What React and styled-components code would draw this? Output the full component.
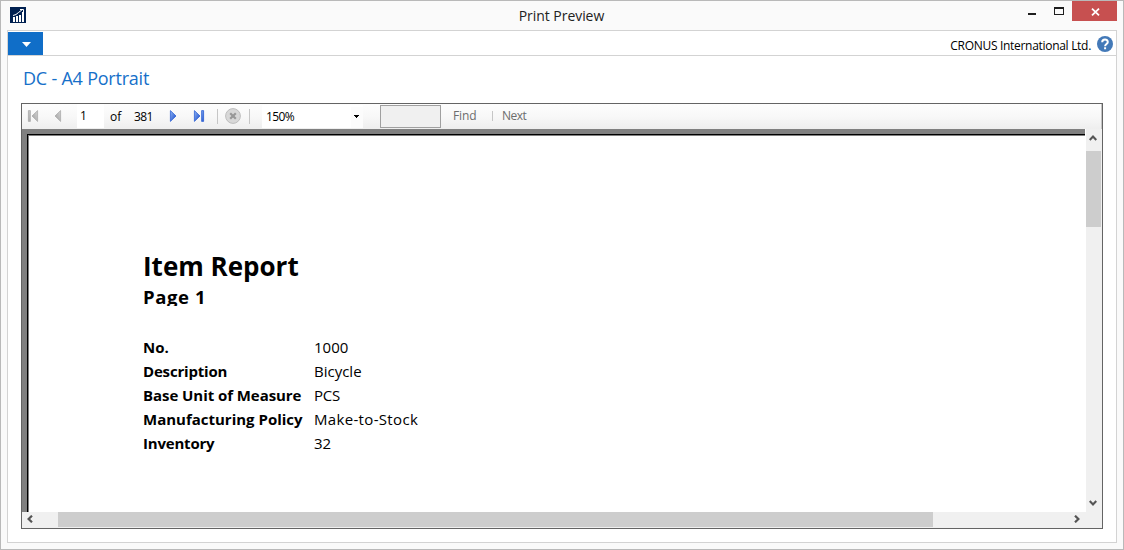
import React from "react";
import styled, { createGlobalStyle } from "styled-components";

const Global = createGlobalStyle`
  * { box-sizing: border-box; }
  body { margin: 0; font-family: "Open Sans", "Noto Sans", sans-serif; color: #000; }
  svg { display: block; flex: none; }
`;

const Window = styled.div`
  width: 1124px; height: 550px; background: #fafafa;
  border: 1px solid #b9b9b9; display: flex; flex-direction: column;
  overflow: hidden;
`;
const TitleBar = styled.header`
  height: 29px; flex: none; display: grid;
  grid-template-columns: 200px 1fr 200px; padding: 0 6px 0 9px;
`;
const AppIcon = styled.div` padding-top: 6px; `;
const Text = styled.span`
  display: block; white-space: pre; margin: 0;
  font-size: ${p => p.$size}px; line-height: ${p => p.$line || 20}px;
  font-weight: ${p => p.$weight || 400};
  letter-spacing: ${p => p.$track || 0}px;
  color: ${p => p.$color || "#000"};
`;
const Caption = styled.div`
  display: flex; justify-content: center; padding: 5px 4px 0 0;
`;
const Controls = styled.div` display: flex; justify-content: flex-end; `;
const CloseButton = styled.button`
  width: 45px; height: 20px; margin-left: 8px; padding: 1px 0 0 1px; border: 0; background: #c75050;
  display: flex; align-items: center; justify-content: center;
`;
const Body = styled.main`
  width: 1110px; height: 513px; margin-left: 6px; background: #fff;
  border: 1px solid #d3d3d3; flex: none;
`;
const Ribbon = styled.nav`
  height: 25px; border-bottom: 1px solid #d3d3d3; display: flex;
  justify-content: space-between;
`;
const FileTab = styled.button`
  width: 35px; height: 23px; margin-top: 1px; border: 0; padding: 1px 0 0 2px; background: #106ec8;
  display: flex; align-items: center; justify-content: center;
`;
const Company = styled.div` display: flex; gap: 5px; padding: 5px 3px 0 0; `;
const Heading = styled.div` height: 47px; padding: 10px 0 0 15px; `;
const Viewer = styled.section`
  width: 1082px; height: 426px; margin-left: 13px; border: 1px solid #646464;
  display: flex; flex-direction: column;
`;
const Toolbar = styled.div`
  height: 25px; flex: none; display: flex;
  background: linear-gradient(#fdfdfd, #f8f8f8 50%, #eeeeee);
  border-right: 1px solid #c4c4c4;
`;
const Tool = styled.div`
  width: ${p => p.$w}px; height: 25px; flex: none; display: flex;
  padding: ${p => p.$top || 0}px 0 0 ${p => p.$left || 0}px;
`;
const PageField = styled(Tool)` background: #fff; height: 24px; `;
const Zoom = styled(Tool)`
  background: #fff; height: 23px; margin-top: 1px; justify-content: space-between;
`;
const ZoomArrow = styled.div` width: 12px; height: 21px; padding: 8px 0 0 3px; background: #fcfcfc; `;
const SearchBox = styled.div`
  width: 61px; height: 23px; margin: 1px 0 0 17px; border: 1px solid #a0a0a0; background: #f0f0f0;
`;
const Divider = styled.div`
  width: 1px; height: ${p => p.$h}px; margin-top: ${p => p.$top}px; background: #c6c6c6;
`;
const Stage = styled.div` flex: 1; display: grid; grid-template-columns: 1063px 1fr; grid-template-rows: 383px 1fr; `;
const Canvas = styled.div` background: #808080; padding: 5px 0 0 5px; `;
const Page = styled.article`
  height: 378px; border: solid #000; border-width: 1px 0 0 1px;
  box-shadow: inset 1px 1px 0 #808080; background: #fff;
  padding: 114px 0 0 115px;
`;
const PageLine = styled.div` height: 22px; overflow: hidden; `;
const Fields = styled.dl`
  margin: 29px 0 0; display: grid; grid-template-columns: 171px 1fr; grid-auto-rows: 24px;
`;
const VScroll = styled.div`
  background: #f0f0f0; border-left: 1px solid #fff; display: flex; flex-direction: column;
  justify-content: space-between; padding: 5px 0 5px;
`;
const VTop = styled.div` display: flex; flex-direction: column; gap: 9px; svg { margin-left: 3px; } `;
const VThumb = styled.div` width: 15px; height: 76px; background: #cdcdcd; `;
const HScroll = styled.div`
  grid-column: 1 / 3; background: #f0f0f0; display: flex; align-items: flex-start; padding-left: 4px;
`;
const HThumb = styled.div` width: 875px; height: 15px; margin: 0 140px 0 24px; background: #cdcdcd; `;
const HArrow = styled.div` margin-top: 3px; `;
const Arrow = styled.svg` transform: rotate(${p => p.$turn || 0}deg); `;

const ScrollArrow = ({ turn }) => (
  <Arrow $turn={turn} width="8" height="8" viewBox="0 0 8 8">
    <path d="M.7 6 4 2.6 7.3 6" fill="none" stroke="#555" strokeWidth="2.2" />
  </Arrow>
);

const Nav = ({ bar, flip, on }) => (
  <svg width="12" height="12" viewBox="0 0 12 12">
    <defs>
      <linearGradient id={on ? "navOn" : "navOff"} x1="0" y1="0" x2="1" y2="1">
        <stop offset="0" stopColor={on ? "#8fb4f4" : "#d2d2d2"} />
        <stop offset="1" stopColor={on ? "#1648c8" : "#a0a0a0"} />
      </linearGradient>
    </defs>
    <g transform={flip ? "translate(12 0) scale(-1 1)" : undefined} fill={`url(#${on ? "navOn" : "navOff"})`} stroke={on ? "#2f62d4" : "#ababab"} strokeWidth=".8">
      <path d="M1.4 .6 7 6 1.4 11.4Z" />
      {bar && <path d="M8.6 .6h2v10.8h-2Z" />}
    </g>
  </svg>
);

const fields = [
  ["No.", "1000", 0, 0],
  ["Description", "Bicycle", -0.18, 0],
  ["Base Unit of Measure", "PCS", -0.06, -0.2],
  ["Manufacturing Policy", "Make-to-Stock", 0, 0.33],
  ["Inventory", "32", -0.2, 0],
];

export default function App() {
  return (
    <>
      <Global />
      <Window>
        <TitleBar>
          <AppIcon>
            <svg width="16" height="16" viewBox="0 0 16 16">
              <path fill="#002050" d="M0 0h16v16H0z" />
              <path fill="#fff" d="M3 10h2v5H3zM6 9h2v6H6zM9 8h2v7H9zM12 5h2v10h-2z" />
              <path d="M3 8.500 6 7.500 8.500 5.500 12.500 2.500M10 2.500h3.500v2.500" fill="none" stroke="#fff" />
            </svg>
          </AppIcon>
          <Caption><Text $size={14} $track={-0.05} $color="#222">Print Preview</Text></Caption>
          <Controls>
            <svg width="37" height="20" viewBox="0 0 37 20">
              <path fill="#1e1e1e" d="M1 12h8v2H1z" />
              <path fill="#1e1e1e" fillRule="evenodd" d="M27 6h10v8H27zM28 8v5h8V8z" />
            </svg>
            <CloseButton aria-label="Close">
              <svg width="9" height="8" viewBox="0 0 9 8"><path d="M1 .7 8 7.3M8 .7 1 7.3" stroke="#fff" strokeWidth="1.8" /></svg>
            </CloseButton>
          </Controls>
        </TitleBar>
        <Body>
          <Ribbon>
            <FileTab aria-label="Menu">
              <svg width="9" height="5" viewBox="0 0 9 5"><path d="M0 0h9L4.5 5z" fill="#fff" /></svg>
            </FileTab>
            <Company>
              <Text $size={12} $track={-0.3}>CRONUS International Ltd.</Text>
              <svg width="17" height="17" viewBox="0 0 17 17">
                <circle cx="9" cy="8" r="8" fill="#4379b8" />
                <path d="M6.200 6.200C6.200 2.700 11.800 2.700 11.800 6c0 2-2.700 2-2.700 4.200M9.100 11.300v2" fill="none" stroke="#fff" strokeWidth="2" />
              </svg>
            </Company>
          </Ribbon>
          <Heading><Text $size={18} $line={25} $track={-0.22} $color="#1670c9">DC - A4 Portrait</Text></Heading>
          <Viewer>
            <Toolbar>
              <Tool $w={28} $top={6} $left={5}><Nav bar flip /></Tool>
              <Tool $w={27} $top={6}><Nav flip /></Tool>
              <PageField $w={27} $left={3} $top={2}><Text $size={12}>1</Text></PageField>
              <Tool $w={30} $left={6} $top={3}><Text $size={12}>of</Text></Tool>
              <Tool $w={35} $top={3}><Text $size={12} $track={-0.6}>381</Text></Tool>
              <Tool $w={24} $top={6}><Nav on /></Tool>
              <Tool $w={24} $top={6}><Nav bar on /></Tool>
              <Divider $h={15} $top={5} />
              <Tool $w={31} $left={7} $top={4}>
                <svg width="16" height="16" viewBox="0 0 16 16">
                  <circle cx="8" cy="8" r="7.4" fill="#d8d8d8" stroke="#bdbdbd" />
                  <path d="M5.2 5.2 10.8 10.8M10.8 5.2 5.2 10.8" stroke="#989898" strokeWidth="2.2" />
                </svg>
              </Tool>
              <Divider $h={15} $top={5} />
              <Tool $w={12} />
              <Zoom $w={101} $left={4} $top={2}>
                <Text $size={12} $track={-0.6}>150%</Text>
                <ZoomArrow><svg width="5" height="3" viewBox="0 0 5 3"><path d="M0 0h5v1H4v1H3v1H2V2H1V1H0z" /></svg></ZoomArrow>
              </Zoom>
              <SearchBox />
              <Tool $w={51} $left={12} $top={2}><Text $size={12} $track={-0.1} $color="#6d6d6d">Find</Text></Tool>
              <Divider $h={10} $top={7} />
              <Tool $w={50} $left={9} $top={2}><Text $size={12} $track={-0.5} $color="#6d6d6d">Next</Text></Tool>
            </Toolbar>
            <Stage>
              <Canvas>
                <Page>
                  <Text as="h1" $size={26} $line={35} $weight={700}>Item Report</Text>
                  <PageLine><Text $size={18.5} $line={26} $weight={700} $track={0.6}>Page 1</Text></PageLine>
                  <Fields>
                    {fields.map(([label, value, lt, vt]) => (
                      <React.Fragment key={label}>
                        <Text as="dt" $size={15} $line={24} $weight={700} $track={lt}>{label}</Text>
                        <Text as="dd" $size={15} $line={24} $track={vt}>{value}</Text>
                      </React.Fragment>
                    ))}
                  </Fields>
                </Page>
              </Canvas>
              <VScroll>
                <VTop><ScrollArrow /><VThumb /></VTop>
                <VTop><ScrollArrow turn={180} /></VTop>
              </VScroll>
              <HScroll>
                <HArrow><ScrollArrow turn={-90} /></HArrow>
                <HThumb />
                <HArrow><ScrollArrow turn={90} /></HArrow>
              </HScroll>
            </Stage>
          </Viewer>
        </Body>
      </Window>
    </>
  );
}
